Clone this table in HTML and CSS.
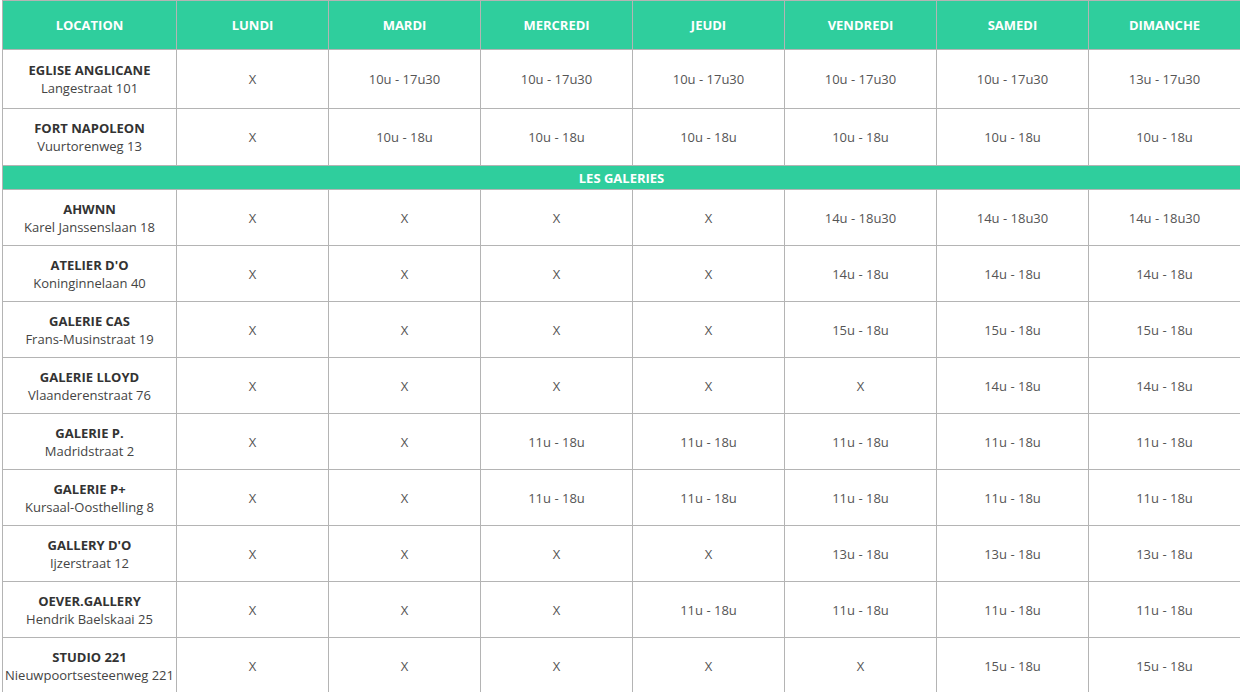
FILE: index.html
```html
<!DOCTYPE html>
<html lang="fr">
<head>
<meta charset="utf-8">
<link rel="stylesheet" href="styles.css">
</head>
<body>
<table class="schedule">
  <colgroup>
    <col class="col-loc">
    <col class="col-day"><col class="col-day"><col class="col-day"><col class="col-day"><col class="col-day"><col class="col-day"><col class="col-day">
  </colgroup>
  <thead>
    <tr class="head">
      <th>LOCATION</th><th>LUNDI</th><th>MARDI</th><th>MERCREDI</th><th>JEUDI</th><th>VENDREDI</th><th>SAMEDI</th><th>DIMANCHE</th>
    </tr>
  </thead>
  <tbody>
    <tr class="row row-tall">
      <td class="loc"><b>EGLISE ANGLICANE</b><span>Langestraat 101</span></td>
      <td>X</td><td>10u - 17u30</td><td>10u - 17u30</td><td>10u - 17u30</td><td>10u - 17u30</td><td>10u - 17u30</td><td>13u - 17u30</td>
    </tr>
    <tr class="row row-mid">
      <td class="loc"><b>FORT NAPOLEON</b><span>Vuurtorenweg 13</span></td>
      <td>X</td><td>10u - 18u</td><td>10u - 18u</td><td>10u - 18u</td><td>10u - 18u</td><td>10u - 18u</td><td>10u - 18u</td>
    </tr>
    <tr class="section">
      <td colspan="8">LES GALERIES</td>
    </tr>
    <tr class="row">
      <td class="loc"><b>AHWNN</b><span>Karel Janssenslaan 18</span></td>
      <td>X</td><td>X</td><td>X</td><td>X</td><td>14u - 18u30</td><td>14u - 18u30</td><td>14u - 18u30</td>
    </tr>
    <tr class="row">
      <td class="loc"><b>ATELIER D'O</b><span>Koninginnelaan 40</span></td>
      <td>X</td><td>X</td><td>X</td><td>X</td><td>14u - 18u</td><td>14u - 18u</td><td>14u - 18u</td>
    </tr>
    <tr class="row">
      <td class="loc"><b>GALERIE CAS</b><span>Frans-Musinstraat 19</span></td>
      <td>X</td><td>X</td><td>X</td><td>X</td><td>15u - 18u</td><td>15u - 18u</td><td>15u - 18u</td>
    </tr>
    <tr class="row">
      <td class="loc"><b>GALERIE LLOYD</b><span>Vlaanderenstraat 76</span></td>
      <td>X</td><td>X</td><td>X</td><td>X</td><td>X</td><td>14u - 18u</td><td>14u - 18u</td>
    </tr>
    <tr class="row">
      <td class="loc"><b>GALERIE P.</b><span>Madridstraat 2</span></td>
      <td>X</td><td>X</td><td>11u - 18u</td><td>11u - 18u</td><td>11u - 18u</td><td>11u - 18u</td><td>11u - 18u</td>
    </tr>
    <tr class="row">
      <td class="loc"><b>GALERIE P+</b><span>Kursaal-Oosthelling 8</span></td>
      <td>X</td><td>X</td><td>11u - 18u</td><td>11u - 18u</td><td>11u - 18u</td><td>11u - 18u</td><td>11u - 18u</td>
    </tr>
    <tr class="row">
      <td class="loc"><b>GALLERY D'O</b><span>Ijzerstraat 12</span></td>
      <td>X</td><td>X</td><td>X</td><td>X</td><td>13u - 18u</td><td>13u - 18u</td><td>13u - 18u</td>
    </tr>
    <tr class="row">
      <td class="loc"><b>OEVER.GALLERY</b><span>Hendrik Baelskaai 25</span></td>
      <td>X</td><td>X</td><td>X</td><td>11u - 18u</td><td>11u - 18u</td><td>11u - 18u</td><td>11u - 18u</td>
    </tr>
    <tr class="row">
      <td class="loc"><b>STUDIO 221</b><span>Nieuwpoortsesteenweg 221</span></td>
      <td>X</td><td>X</td><td>X</td><td>X</td><td>X</td><td>15u - 18u</td><td>15u - 18u</td>
    </tr>
  </tbody>
</table>
</body>
</html>
```
FILE: styles.css
```css
html, body {
  margin: 0;
  padding: 0;
  background: #ffffff;
}
body {
  font-family: "Open Sans", "Liberation Sans", sans-serif;
  font-size: 13px;
  color: #555555;
}
.schedule {
  border-collapse: collapse;
  table-layout: fixed;
  width: 1236px;
  margin: 0 0 0 2px;
}
.col-loc { width: 174px; }
.col-day { width: 152px; }
.schedule th,
.schedule td {
  border: 1px solid #b4b4b4;
  text-align: center;
  vertical-align: middle;
  padding: 0 2px;
  line-height: 18px;
}
.head th {
  background: #2fce9d;
  color: #ffffff;
  font-weight: 700;
  font-size: 13px;
  height: 48px;
}
.row td { height: 55px; }
.row-tall td { height: 58px; }
.row-mid td { height: 56px; }
.loc b {
  display: block;
  color: #333333;
  font-weight: 700;
  font-size: 13px;
}
.loc span {
  display: block;
  color: #444444;
  white-space: nowrap;
}
.section td {
  background: #2fce9d;
  color: #ffffff;
  font-weight: 700;
  height: 23px;
  line-height: 16px;
}
```
